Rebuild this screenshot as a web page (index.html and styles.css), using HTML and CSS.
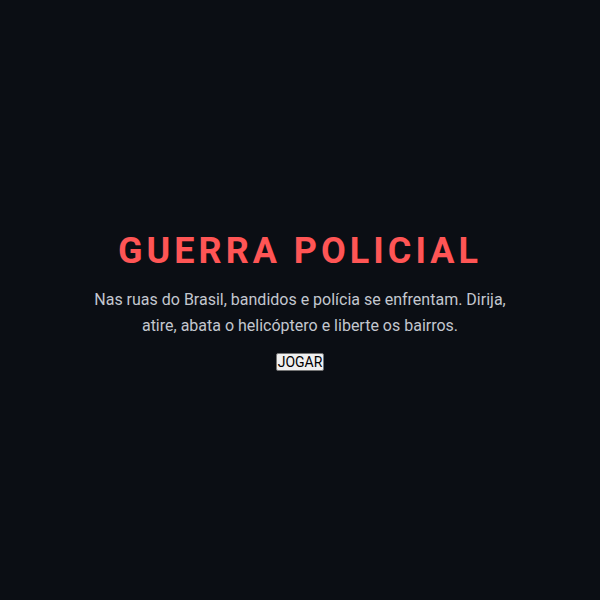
FILE: index.html
```html
<!DOCTYPE html>
<html lang="pt-BR">
  <head>
    <meta charset="UTF-8" />
    <meta name="viewport" content="width=device-width, initial-scale=1.0" />
    <title>Guerra Policial</title>
    <link rel="stylesheet" href="styles.css">
  </head>
  <body>
    <div id="menu">
      <h1>GUERRA POLICIAL</h1>
      <p>Nas ruas do Brasil, bandidos e polícia se enfrentam. Dirija, atire, abata o helicóptero e liberte os bairros.</p>
      <button type="button" id="start-btn">JOGAR</button>
    </div>
  </body>
</html>
```

FILE: styles.css
```css
* {
  box-sizing: border-box;
  margin: 0;
  padding: 0;
}
body {
  font-family: Roboto, "Liberation Sans", Arial, sans-serif;
  background-color: #0b0e14;
  color: #c3c7cf;
  display: flex;
  justify-content: center;
  align-items: center;
  height: 100vh;
}
#menu {
  text-align: center;
  max-width: 440px;
}
h1 {
  color: #ff5555;
  font-size: 36px;
  line-height: 42px;
  font-weight: 700;
  letter-spacing: 4px;
  margin-bottom: 15px;
}
p {
  font-size: 16px;
  line-height: 26px;
  margin-bottom: 13px;
}
#start-btn {
  font-family: Roboto, "Liberation Sans", Arial, sans-serif;
  font-size: 14px;
  line-height: 16px;
  padding: 0 1px;
  color: #000;
  background-color: #f0f0f0;
  border: 1px solid #767676;
  border-radius: 2px;
}
```
